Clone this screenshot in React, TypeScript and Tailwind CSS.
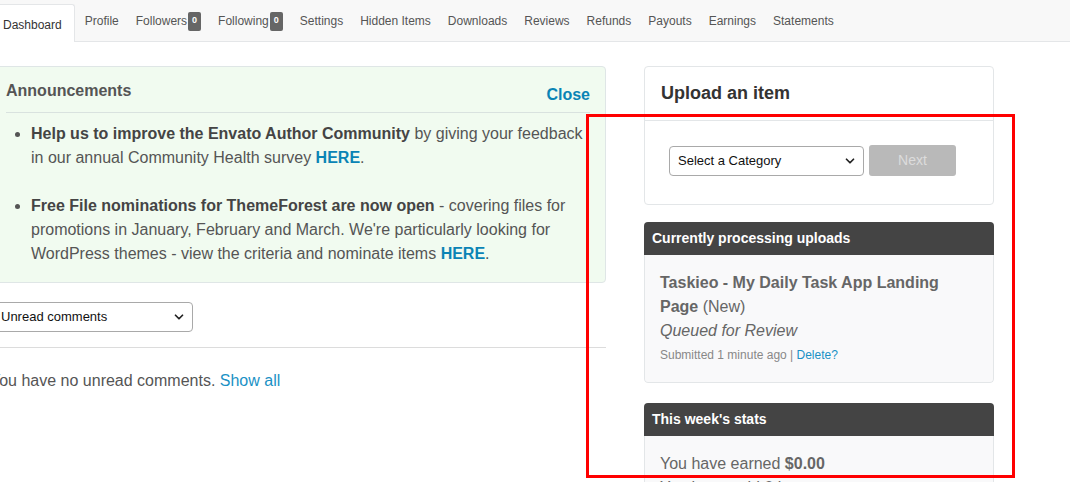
import { ChevronDown } from "lucide-react";

const tabs = [
  { label: "Profile" },
  { label: "Followers", badge: "0" },
  { label: "Following", badge: "0" },
  { label: "Settings" },
  { label: "Hidden Items" },
  { label: "Downloads" },
  { label: "Reviews" },
  { label: "Refunds" },
  { label: "Payouts" },
  { label: "Earnings" },
  { label: "Statements" },
];

function FakeSelect({ label, className }: { label: string; className: string }) {
  return (
    <div
      className={`flex items-center justify-between border border-[#a9a9a9] rounded-[4px] bg-white text-[13px] text-[#111] ${className}`}
    >
      <span>{label}</span>
      <ChevronDown className="w-[14px] h-[14px] text-[#222]" strokeWidth={3} />
    </div>
  );
}

export default function App() {
  return (
    <div className="relative w-[1070px] h-[482px] overflow-hidden bg-white font-['Liberation_Sans',Arial,sans-serif]">
      {/* tab bar */}
      <div className="h-[42px] bg-[#f8f8f8] border-b border-[#e4e6e8] flex items-end -ml-[10px]">
        <div className="h-[38px] -mb-px pl-[12px] pr-[12px] flex items-center bg-white border border-b-0 border-[#e4e6e8] rounded-t-[3px] text-[12px] text-[#333] pt-[2px]">
          Dashboard
        </div>
        <div className="flex items-center h-[41px] pl-[10px] gap-[17px]">
          {tabs.map((t) => (
            <div key={t.label} className="flex items-center text-[12px] text-[#555] pt-[1px]">
              {t.label}
              {t.badge && (
                <span className="ml-[1px] inline-flex items-center justify-center w-[13px] h-[19px] rounded-[2px] bg-[#666] text-white text-[9px] font-bold">
                  {t.badge}
                </span>
              )}
            </div>
          ))}
        </div>
      </div>

      <div className="flex gap-[38px] -ml-[10px] pt-[24px]">
        {/* left column */}
        <div className="w-[616px] shrink-0">
          <div className="bg-[#f1fbf0] border border-[#dfe6e6] rounded-[4px] px-[15px] pt-[12px] pb-[16px]">
            <div className="flex items-end justify-between border-b border-[#d9e2df] pb-[9px]">
              <h2 className="text-[16px] font-bold text-[#555]">Announcements</h2>
              <a className="text-[16px] font-bold text-[#0a84b5] leading-[20px] -mb-[2px]">Close</a>
            </div>
            <ul className="mt-[9px] text-[16px] leading-[24px] text-[#555] list-disc pl-[25px] space-y-[24px]">
              <li>
                <b className="text-[#444]">Help us to improve the Envato Author Community</b> by giving your
                feedback in our annual Community Health survey{" "}
                <b className="text-[#0a84b5]">HERE</b>.
              </li>
              <li>
                <b className="text-[#444]">Free File nominations for ThemeForest are now open</b> - covering
                files for promotions in January, February and March. We're particularly looking for WordPress
                themes - view the criteria and nominate items <b className="text-[#0a84b5]">HERE</b>.
              </li>
            </ul>
          </div>

          <div className="pt-[19px] pb-[15px] border-b border-[#dcdcdc]">
            <FakeSelect label="Unread comments" className="w-[203px] h-[30px] pl-[10px] pr-[6px]" />
          </div>

          <p className="mt-[21px] text-[16px] text-[#555]">
            You have no unread comments. <a className="text-[#1a91c5]">Show all</a>
          </p>
        </div>

        {/* right column */}
        <div className="w-[350px] shrink-0 flex flex-col gap-[17px]">
          <div className="bg-white border border-[#e3e6e8] rounded-[4px]">
            <h2 className="px-[16px] pt-[15px] pb-[16px] text-[18px] font-bold text-[#333] leading-[22px] border-b border-[#e3e6e8]">
              Upload an item
            </h2>
            <div className="flex items-center gap-[5px] px-[24px] pt-[24px] pb-[28px]">
              <FakeSelect label="Select a Category" className="w-[195px] h-[30px] pl-[8px] pr-[6px]" />
              <button className="w-[87px] h-[31px] rounded-[3px] bg-[#b9b9b9] text-[#dcdcdc] text-[14px]">
                Next
              </button>
            </div>
          </div>

          <div className="rounded-[4px] overflow-hidden">
            <div className="h-[33px] bg-[#444] px-[8px] flex items-center text-[14px] font-bold text-white">
              Currently processing uploads
            </div>
            <div className="bg-[#f9f9fa] border border-t-0 border-[#e3e6e8] rounded-b-[4px] px-[15px] pt-[16px] pb-[18px]">
              <p className="text-[16px] leading-[24px] text-[#666] w-[290px]">
                <b>Taskieo - My Daily Task App Landing Page</b> (New)
              </p>
              <p className="text-[16px] leading-[24px] text-[#666] italic">Queued for Review</p>
              <p className="mt-[3px] text-[12px] text-[#888]">
                Submitted 1 minute ago | <a className="text-[#1a91c5]">Delete?</a>
              </p>
            </div>
          </div>

          <div className="rounded-t-[4px] overflow-hidden mt-[3px]">
            <div className="h-[33px] bg-[#444] px-[8px] flex items-center text-[14px] font-bold text-white">
              This week's stats
            </div>
            <div className="bg-[#f9f9fa] border border-t-0 border-[#e3e6e8] px-[15px] pt-[16px] pb-[10px] text-[16px] leading-[24px] text-[#666]">
              <p>
                You have earned <b>$0.00</b>
              </p>
              <p>You have sold 0 items</p>
            </div>
          </div>
        </div>
      </div>

      {/* annotation overlay */}
      <div className="absolute left-[586px] top-[114px] w-[429px] h-[364px] border-[3px] border-[#ff0000] pointer-events-none" />
    </div>
  );
}
